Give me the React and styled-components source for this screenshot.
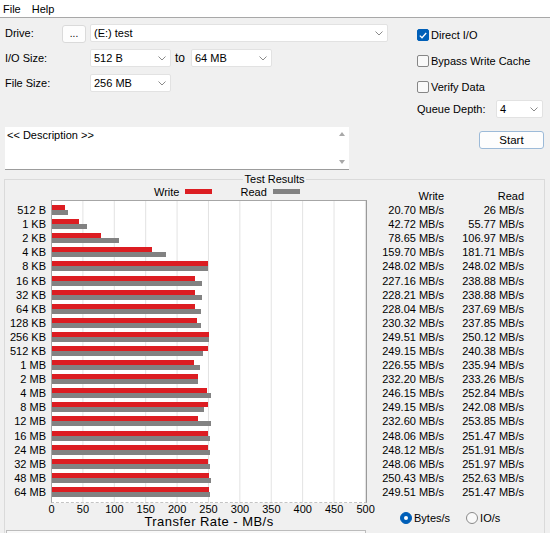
import React from 'react';
import styled, { createGlobalStyle } from 'styled-components';

const GlobalStyle = createGlobalStyle`
  html, body { margin: 0; padding: 0; background: #f0f0f0; overflow: hidden; }
  body { font-family: "Liberation Sans", Arial, sans-serif; font-size: 11px; color: #000; }
  * { box-sizing: border-box; }
`;

const rows = [
  ['512 B', '20.70', '26'],
  ['1 KB', '42.72', '55.77'],
  ['2 KB', '78.65', '106.97'],
  ['4 KB', '159.70', '181.71'],
  ['8 KB', '248.02', '248.02'],
  ['16 KB', '227.16', '238.88'],
  ['32 KB', '228.21', '238.88'],
  ['64 KB', '228.04', '237.69'],
  ['128 KB', '230.32', '237.85'],
  ['256 KB', '249.51', '250.12'],
  ['512 KB', '249.15', '240.38'],
  ['1 MB', '226.55', '235.94'],
  ['2 MB', '232.20', '233.26'],
  ['4 MB', '246.15', '252.84'],
  ['8 MB', '249.15', '242.08'],
  ['12 MB', '232.60', '253.85'],
  ['16 MB', '248.06', '251.47'],
  ['24 MB', '248.12', '251.91'],
  ['32 MB', '248.06', '251.97'],
  ['48 MB', '250.43', '252.63'],
  ['64 MB', '249.51', '251.47'],
];

const ticks = ['0', '50', '100', '150', '200', '250', '300', '350', '400', '450', '500'];
const SCALE = 314 / 500;

const Window = styled.div`
  width: 550px;
  height: 533px;
  overflow: hidden;
  background: #f0f0f0;
`;

const MenuBar = styled.div`
  height: 18px;
  background: #fff;
  border-bottom: 1px solid #a8a8a8;
  display: flex;
  align-items: center;
  gap: 11px;
  padding-left: 3px;
`;

const MenuItem = styled.span`
  line-height: 16px;
`;

const Top = styled.div`
  display: grid;
  grid-template-columns: 383px 127px;
  grid-template-rows: 96px auto;
  column-gap: 29px;
  row-gap: 9px;
  padding: 4px 0 0 5px;
`;

const Form = styled.div`
  display: flex;
  flex-direction: column;
  gap: 7px;
  padding-top: 2px;
`;

const FormRow = styled.div`
  display: flex;
  align-items: center;
  height: 18px;
`;

const Label = styled.span`
  width: ${p => p.$w}px;
  flex: none;
`;

const ComboBox = styled.div`
  width: ${p => p.$w}px;
  height: 18px;
  flex: none;
  background: #fff;
  border: 1px solid #e2e2e2;
  border-radius: 2px;
  display: flex;
  align-items: center;
  justify-content: space-between;
  padding: 0 4px 0 3px;
`;

const BrowseButton = styled.div`
  width: 24px;
  height: 18px;
  margin: 1px 4px 0 0;
  background: #fdfdfd;
  border: 1px solid #dadada;
  border-radius: 3px;
  display: flex;
  align-items: flex-end;
  justify-content: center;
  padding-bottom: 3px;
  font-size: 10px;
  line-height: 10px;
`;

const ToText = styled.span`
  width: 20px;
  padding-left: 4px;
  font-size: 12px;
`;

const Options = styled.div`
  display: flex;
  flex-direction: column;
`;

const CheckRow = styled.label`
  height: 26px;
  display: flex;
  align-items: center;
  gap: 2px;
`;

const Box = styled.span`
  width: 12px;
  height: 12px;
  border-radius: 2px;
  border: 1px solid ${p => (p.$checked ? '#005fb8' : '#868686')};
  background: ${p => (p.$checked ? '#005fb8' : '#f9f9f9')};
  display: flex;
  align-items: center;
  justify-content: center;
`;

const QueueRow = styled.div`
  height: 18px;
  display: flex;
  align-items: center;
`;

const Description = styled.div`
  width: 344px;
  height: 43px;
  background: #fff;
  border-bottom: 1px solid #9c9c9c;
  display: flex;
  justify-content: space-between;
  padding: 2px 4px 0 2px;
  line-height: 13px;
`;

const ScrollArrows = styled.div`
  display: flex;
  flex-direction: column;
  justify-content: space-between;
  padding: 3px 0 5px;
`;

const StartButton = styled.div`
  justify-self: end;
  align-self: start;
  width: 65px;
  height: 18px;
  margin-top: 4px;
  background: #fdfdfd;
  border: 1px solid #9cbad8;
  border-radius: 3px;
  display: flex;
  align-items: center;
  justify-content: center;
  font-size: 11.5px;
`;

const Group = styled.fieldset`
  margin: 3px 0 0 4px;
  width: 541px;
  padding: 0;
  min-width: 0;
  border: 1px solid #dadada;
`;

const GroupTitle = styled.legend`
  margin: 0 auto;
  padding: 0 2px;
  line-height: 13px;
`;

const GroupBody = styled.div`
  display: flex;
`;

const ChartGrid = styled.div`
  display: grid;
  grid-template-columns: 46px 316px;
  grid-template-rows: 14px 303px 12px 14px;
`;

const Legend = styled.div`
  grid-column: 2;
  grid-row: 1;
  display: flex;
  align-items: center;
  height: 11px;
  padding-left: 103px;
`;

const LegendText = styled.span`
  margin-left: ${p => p.$ml || 0}px;
`;

const Swatch = styled.span`
  width: 27px;
  height: 5px;
  margin-left: 6px;
  background: ${p => p.$color};
`;

const RowLabels = styled.div`
  grid-column: 1;
  grid-row: 2;
  display: flex;
  flex-direction: column;
  padding: 3px 5px 4px 0;
`;

const RowLabel = styled.div`
  flex: 1;
  display: flex;
  align-items: center;
  justify-content: flex-end;
  white-space: nowrap;
`;

const Plot = styled.div`
  grid-column: 2;
  grid-row: 2;
  display: flex;
  flex-direction: column;
  padding: 2px 0 3px;
  background-color: #fff;
  background-image: linear-gradient(to right, transparent 30.4px, #e2e2e2 30.4px);
  background-size: 31.4px 100%;
  border-top: 1px solid #a6a6a6;
  border-left: 1px solid #a6a6a6;
  border-right: 1px solid #9a9a9a;
  border-bottom: 1px dashed #c4c4c4;
`;

const BarRow = styled.div`
  flex: 1;
  display: flex;
  flex-direction: column;
  justify-content: center;
`;

const Bar = styled.div`
  height: 5px;
  background: ${p => p.$color};
`;

const Ticks = styled.div`
  grid-column: 2;
  grid-row: 3;
  display: flex;
  margin-left: -15.2px;
  width: 345.4px;
  line-height: 12px;
`;

const Tick = styled.span`
  flex: 1;
  text-align: center;
`;

const AxisTitle = styled.div`
  grid-column: 2;
  grid-row: 4;
  text-align: center;
  font-size: 13px;
  letter-spacing: 0.45px;
  line-height: 14px;
`;

const Values = styled.div`
  display: flex;
  flex-direction: column;
`;

const ValueHeader = styled.div`
  display: grid;
  grid-template-columns: 77px 80px;
  height: 17px;
  padding-top: 4px;
  line-height: 13px;
  text-align: right;
`;

const ValueRows = styled.div`
  height: 296px;
  display: flex;
  flex-direction: column;
`;

const ValueRow = styled.div`
  flex: 1;
  display: grid;
  grid-template-columns: 77px 80px;
  align-items: center;
  text-align: right;
  white-space: nowrap;
`;

const RadioRow = styled.div`
  display: flex;
  align-items: center;
  height: 13px;
  margin-top: 12px;
  padding-left: 33px;
  gap: 16px;
`;

const RadioOption = styled.label`
  display: flex;
  align-items: center;
  gap: 2px;
`;

const RadioDot = styled.span`
  width: 12px;
  height: 12px;
  border-radius: 50%;
  background: ${p => (p.$checked ? '#005fb8' : '#f9f9f9')};
  border: 1px solid ${p => (p.$checked ? '#005fb8' : '#8a8a8a')};
  display: flex;
  align-items: center;
  justify-content: center;
  &::after {
    content: '';
    display: ${p => (p.$checked ? 'block' : 'none')};
    width: 4px;
    height: 4px;
    border-radius: 50%;
    background: #fff;
  }
`;

const Progress = styled.div`
  width: 360px;
  height: 14px;
  margin: 1px 0 0 1px;
  background: linear-gradient(#fafafa, #eaeaea);
  border: 1px solid #bcbcbc;
`;

const Chevron = () => (
  <svg width="8" height="5" viewBox="0 0 8 5">
    <path d="M0.5 0.5 L4 4 L7.5 0.5" fill="none" stroke="#8a8a8a" strokeWidth="1" />
  </svg>
);

const Combo = ({ w, children }) => (
  <ComboBox $w={w}>
    <span>{children}</span>
    <Chevron />
  </ComboBox>
);

const Check = ({ checked, children }) => (
  <CheckRow>
    <Box $checked={checked}>
      {checked && (
        <svg width="8" height="7" viewBox="0 0 8 7">
          <path d="M0.8 3.6 L3 5.7 L7.2 1" fill="none" stroke="#fff" strokeWidth="1.3" />
        </svg>
      )}
    </Box>
    <span>{children}</span>
  </CheckRow>
);

const Arrow = ({ up }) => (
  <svg width="6" height="4" viewBox="0 0 6 4">
    <path d={up ? 'M0 4 L3 0 L6 4 Z' : 'M0 0 L3 4 L6 0 Z'} fill="#a8a8a8" />
  </svg>
);

export default function App() {
  return (
    <Window>
      <GlobalStyle />
      <MenuBar>
        <MenuItem>File</MenuItem>
        <MenuItem>Help</MenuItem>
      </MenuBar>
      <Top>
        <Form>
          <FormRow>
            <Label $w={57}>Drive:</Label>
            <BrowseButton>...</BrowseButton>
            <Combo w={298}>(E:) test</Combo>
          </FormRow>
          <FormRow>
            <Label $w={85}>I/O Size:</Label>
            <Combo w={81}>512 B</Combo>
            <ToText>to</ToText>
            <Combo w={81}>64 MB</Combo>
          </FormRow>
          <FormRow>
            <Label $w={85}>File Size:</Label>
            <Combo w={81}>256 MB</Combo>
          </FormRow>
        </Form>
        <Options>
          <Check checked>Direct I/O</Check>
          <Check>Bypass Write Cache</Check>
          <Check>Verify Data</Check>
          <QueueRow>
            <Label $w={79}>Queue Depth:</Label>
            <Combo w={47}>4</Combo>
          </QueueRow>
        </Options>
        <Description>
          <span>&lt;&lt; Description &gt;&gt;</span>
          <ScrollArrows>
            <Arrow up />
            <Arrow />
          </ScrollArrows>
        </Description>
        <StartButton>Start</StartButton>
      </Top>
      <Group>
        <GroupTitle>Test Results</GroupTitle>
        <GroupBody>
          <ChartGrid>
            <Legend>
              <LegendText>Write</LegendText>
              <Swatch $color="#dc1d22" />
              <LegendText $ml={28}>Read</LegendText>
              <Swatch $color="#828282" />
            </Legend>
            <RowLabels>
              {rows.map(r => (
                <RowLabel key={r[0]}>{r[0]}</RowLabel>
              ))}
            </RowLabels>
            <Plot>
              {rows.map(r => (
                <BarRow key={r[0]}>
                  <Bar $color="#dc1d22" style={{ width: `${parseFloat(r[1]) * SCALE}px` }} />
                  <Bar $color="#828282" style={{ width: `${parseFloat(r[2]) * SCALE}px` }} />
                </BarRow>
              ))}
            </Plot>
            <Ticks>
              {ticks.map(t => (
                <Tick key={t}>{t}</Tick>
              ))}
            </Ticks>
            <AxisTitle>Transfer Rate - MB/s</AxisTitle>
          </ChartGrid>
          <Values>
            <ValueHeader>
              <span>Write</span>
              <span>Read</span>
            </ValueHeader>
            <ValueRows>
              {rows.map(r => (
                <ValueRow key={r[0]}>
                  <span>{r[1]} MB/s</span>
                  <span>{r[2]} MB/s</span>
                </ValueRow>
              ))}
            </ValueRows>
            <RadioRow>
              <RadioOption>
                <RadioDot $checked />
                <span>Bytes/s</span>
              </RadioOption>
              <RadioOption>
                <RadioDot />
                <span>IO/s</span>
              </RadioOption>
            </RadioRow>
          </Values>
        </GroupBody>
        <Progress />
      </Group>
    </Window>
  );
}
